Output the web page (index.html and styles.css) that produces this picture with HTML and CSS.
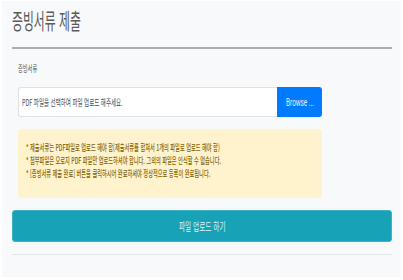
FILE: index.html
```html
<!DOCTYPE html>
<html lang="ko">
<head>
    <meta charset="UTF-8">
    <meta name="viewport" content="width=device-width, initial-scale=1.0">
    <title>증빙서류 제출</title>
    <link rel="stylesheet" href="styles.css">
</head>
<body>
    <div class="panel">
        <div class="page-title">
            <h1><span class="squeeze">증빙서류 제출</span></h1>
        </div>

        <form class="upload-form">
            <div class="form-group">
                <label for="doc-file"><span class="squeeze">증빙서류</span></label>
                <div class="file-row">
                    <div class="file-input"><span class="squeeze">PDF 파일을 선택하여 파일 업로드 해주세요.</span></div>
                    <div class="browse-btn"><span class="squeeze">Browse ...</span></div>
                </div>
            </div>

            <div class="notice">
                <p><span class="squeeze">* 제출서류는 PDF파일로 업로드 해야 함(제출서류를 합쳐서 1개의 파일로 업로드 해야 함)</span></p>
                <p><span class="squeeze">* 첨부파일은 오로지 PDF 파일만 업로드하셔야 합니다. 그외의 파일은 인식할 수 없습니다.</span></p>
                <p><span class="squeeze">* [증빙서류 제출 완료] 버튼을 클릭하시어 완료하셔야 정상적으로 등록이 완료됩니다.</span></p>
            </div>
        </form>

        <button type="button" class="submit-btn"><span class="squeeze">파일 업로드 하기</span></button>
        <hr class="divider">
    </div>
</body>
</html>
```

FILE: styles.css
```css
body {
    margin: 0;
    background-color: #ffffff;
    font-family: "Noto Sans CJK KR", "Noto Sans", sans-serif;
    color: #333;
}
.panel {
    margin: 1px 3px 0 2px;
    height: 276px;
    padding: 0 8px 0 10px;
    background-color: #f8f9fa;
    box-sizing: border-box;
}
.squeeze {
    display: inline-block;
    white-space: nowrap;
    transform: scaleX(0.58);
    transform-origin: left center;
}
.page-title {
    height: 46px;
    border-bottom: 2px solid #adadad;
}
h1 {
    margin: 0;
    padding: 4px 0 0 0;
    font-size: 22px;
    font-weight: 400;
    line-height: 28px;
    color: #5a5a5a;
}
h1 .squeeze {
    transform: scaleX(0.54);
}
.upload-form {
    width: 304px;
    margin: 14px 0 0 6px;
}
label {
    display: block;
    font-size: 9px;
    line-height: 12px;
    color: #555;
}
.file-row {
    display: flex;
    margin-top: 12px;
    height: 30px;
}
.file-input {
    flex: 1;
    display: flex;
    align-items: center;
    padding-left: 3px;
    background-color: #fff;
    border: 1px solid #dde2e6;
    border-right: none;
    border-radius: 3px 0 0 3px;
    font-size: 9.5px;
    color: #495057;
}
.browse-btn {
    width: 45px;
    display: flex;
    align-items: center;
    justify-content: center;
    background-color: #007bff;
    border-radius: 0 3px 3px 0;
    font-family: Roboto, "Noto Sans", sans-serif;
    font-size: 11px;
    color: #e6f0ff;
}
.browse-btn .squeeze {
    transform-origin: center;
}
.notice {
    margin-top: 12px;
    height: 69px;
    box-sizing: border-box;
    padding: 12px 8px 0 8px;
    background-color: #fff3cd;
    border-radius: 3px;
    font-size: 9px;
    font-weight: 500;
    color: #856404;
}
.notice p {
    margin: 0;
    line-height: 13px;
}
.submit-btn {
    display: block;
    width: 100%;
    height: 32px;
    margin-top: 12px;
    background-color: #17a2b8;
    border: 1px solid #3fb3c6;
    border-radius: 3px;
    font-family: "Noto Sans CJK KR", sans-serif;
    font-size: 11.5px;
    color: #dff3f6;
}
.submit-btn .squeeze {
    transform-origin: center;
}
.divider {
    margin: 12px 0 0 0;
    border: none;
    border-top: 1px solid #e3e5e8;
}
```
